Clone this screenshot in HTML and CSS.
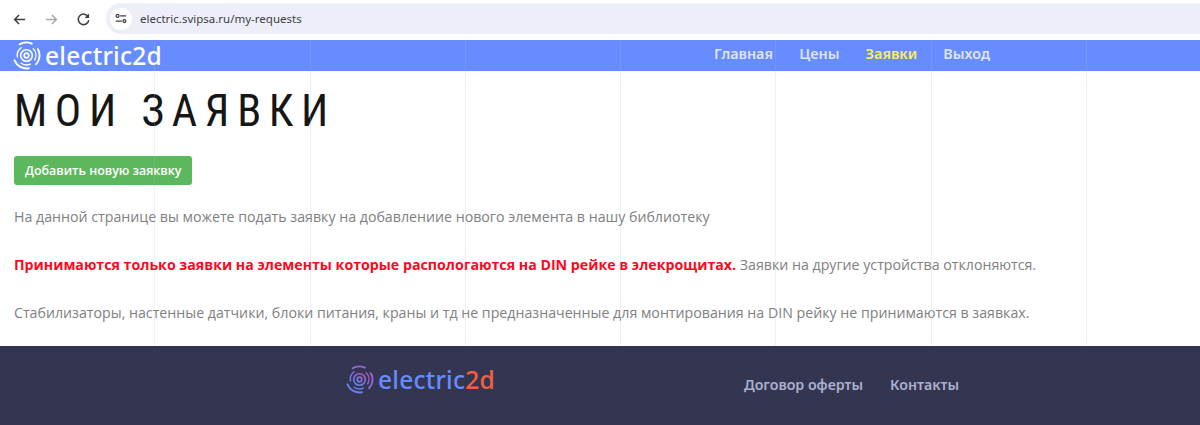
FILE: index.html
```html
<!DOCTYPE html>
<html lang="ru">
<head>
<meta charset="utf-8">
<title>Мои заявки</title>
<link rel="stylesheet" href="styles.css">
</head>
<body>
<header class="chrome">
  <svg class="nav-icon" viewBox="0 0 16 16"><path d="M14 8H3M7.5 3.2 2.8 8l4.7 4.8" fill="none" stroke="#3c4043" stroke-width="1.6"/></svg>
  <svg class="nav-icon" viewBox="0 0 16 16"><path d="M2 8h11M8.5 3.2 13.2 8l-4.7 4.8" fill="none" stroke="#a5a7aa" stroke-width="1.6"/></svg>
  <svg class="nav-icon" viewBox="0 0 16 16"><path d="M13 5.2A5.6 5.6 0 1 0 13.6 8.6" fill="none" stroke="#3c4043" stroke-width="1.6"/><path d="M13.9 1.6v4.8H9.1z" fill="#3c4043"/></svg>
  <div class="omnibox">
    <span class="site-chip">
      <svg viewBox="0 0 14 12" width="12" height="11"><g fill="none" stroke="#3c4043" stroke-width="1.5"><path d="M6 3h7M1 9h7"/><circle cx="3" cy="3" r="1.7"/><circle cx="11" cy="9" r="1.7"/></g></svg>
    </span>
    <span class="url">electric.svipsa.ru/my-requests</span>
  </div>
</header>

<div class="page">
  <div class="grid-lines">
    <i></i><i></i><i></i><i></i><i></i><i></i><i></i><i></i>
  </div>

  <nav class="navbar">
    <a class="logo logo-light" href="#">
      <svg class="logo-mark" viewBox="0 0 30 30">
        <g fill="none" stroke="#fff" stroke-linecap="round">
          <circle cx="15" cy="15" r="2.4" stroke-width="1.7"/>
          <circle cx="15" cy="15" r="6" stroke-width="1.6"/>
          <path d="M5.6 16.5A9.6 9.6 0 0 1 9.5 7M22 8A9.6 9.6 0 0 1 23.5 19.5M19 24A9.6 9.6 0 0 1 9.5 23" stroke-width="1.5"/>
          <path d="M8 3.4A13.4 13.4 0 0 1 20.5 2.8M26.8 8.5A13.4 13.4 0 0 1 25 24M17.5 28.2A13.4 13.4 0 0 1 2.6 20" stroke-width="2"/>
        </g>
      </svg>
      <span>electric2d</span>
    </a>
    <ul class="menu">
      <li><a href="#">Главная</a></li>
      <li><a href="#">Цены</a></li>
      <li><a class="active" href="#">Заявки</a></li>
      <li><a href="#">Выход</a></li>
    </ul>
  </nav>

  <main class="content">
    <h1>Мои заявки</h1>
    <a class="btn" href="#">Добавить новую заяквку</a>
    <p class="first">На данной странице вы можете подать заявку на добавлениие нового элемента в нашу библиотеку</p>
    <p><strong>Принимаются только заявки на элементы которые распологаются на DIN рейке в элекрощитах.</strong> Заявки на другие устройства отклоняются.</p>
    <p>Стабилизаторы, настенные датчики, блоки питания, краны и тд не предназначенные для монтирования на DIN рейку не принимаются в заявках.</p>
  </main>

  <footer class="footer">
    <a class="logo logo-color" href="#">
      <svg class="logo-mark" viewBox="0 0 30 30">
        <defs><linearGradient id="lg" x1="0" y1="1" x2="1" y2="0"><stop offset="0" stop-color="#4f8cf0"/><stop offset="1" stop-color="#b455c8"/></linearGradient></defs>
        <g fill="none" stroke="url(#lg)" stroke-linecap="round">
          <circle cx="15" cy="15" r="2.4" stroke-width="1.7"/>
          <circle cx="15" cy="15" r="6" stroke-width="1.6"/>
          <path d="M5.6 16.5A9.6 9.6 0 0 1 9.5 7M22 8A9.6 9.6 0 0 1 23.5 19.5M19 24A9.6 9.6 0 0 1 9.5 23" stroke-width="1.5"/>
          <path d="M8 3.4A13.4 13.4 0 0 1 20.5 2.8M26.8 8.5A13.4 13.4 0 0 1 25 24M17.5 28.2A13.4 13.4 0 0 1 2.6 20" stroke-width="2"/>
        </g>
      </svg>
      <span>electric<b>2d</b></span>
    </a>
    <div class="footer-links">
      <a href="#">Договор оферты</a>
      <a href="#">Контакты</a>
    </div>
  </footer>
</div>
</body>
</html>
```
FILE: styles.css
```css
* { box-sizing: border-box; }
html, body { margin: 0; padding: 0; }
body {
  width: 1200px;
  height: 425px;
  overflow: hidden;
  background: #fff;
  font-family: "Open Sans", "Noto Sans", sans-serif;
  color: #7a7a7a;
}
a { text-decoration: none; color: inherit; }

.chrome {
  height: 40px;
  display: flex;
  align-items: flex-start;
  padding: 3px 0 0 12px;
  background: #fff;
}
.nav-icon { width: 15px; height: 15px; margin: 9px 17px 0 0; flex: none; }
.nav-icon:nth-child(3) { margin-right: 15px; }
.omnibox {
  flex: 1;
  height: 31px;
  border-radius: 16px 0 0 16px;
  background: #edeff8;
  display: flex;
  align-items: center;
  padding-left: 4px;
}
.site-chip {
  width: 22px;
  height: 22px;
  border-radius: 50%;
  background: #fff;
  display: flex;
  align-items: center;
  justify-content: center;
  margin-right: 8px;
}
.url { font: 11.5px "Noto Sans", sans-serif; color: #3c4043; }

.page { position: relative; height: 385px; display: flex; flex-direction: column; }
.grid-lines {
  position: absolute;
  inset: 0;
  z-index: 2;
  pointer-events: none;
  display: grid;
  grid-template-columns: repeat(8, 155.3px);
  height: 306px;
}
.grid-lines i { border-right: 1px solid rgba(180, 185, 225, .22); }

.navbar {
  height: 31px;
  background: #668cff;
  display: flex;
  align-items: center;
  padding-left: 12px;
  position: relative;
}
.logo { display: flex; align-items: center; font-family: "Noto Sans", sans-serif; font-weight: 500; letter-spacing: .25px; }
.logo-mark { width: 29px; height: 29px; flex: none; margin-right: 4px; }
.logo-light { color: #fff; font-size: 24.5px; line-height: 29px; }
.logo-color { color: #668cff; font-size: 24.5px; line-height: 29px; }
.logo-color b { color: #f2613f; font-weight: 500; }

.menu {
  list-style: none;
  margin: 0;
  padding: 0 0 4px;
  position: absolute;
  left: 714px;
  top: 0;
  height: 31px;
  display: flex;
  align-items: center;
  gap: 26.2px;
  font: 600 14.4px "Noto Sans", sans-serif;
  color: #dfe4f6;
}
.menu .active { color: #ffee55; }

.content { flex: 1; padding: 0 14px; }
h1 {
  margin: 18px 0 0;
  font: 400 44px/44px Roboto, sans-serif;
  font-stretch: 75%;
  letter-spacing: 7.6px;
  text-transform: uppercase;
  color: #161616;
}
.btn {
  display: inline-block;
  margin-top: 23px;
  height: 29px;
  padding: 0 10.5px 0 11px;
  line-height: 29px;
  background: #5cb85c;
  border-radius: 3px;
  color: #fff;
  font-size: 12.4px;
  font-weight: 600;
}
.content p { margin: 0; font-size: 14.2px; line-height: 20px; color: #808080; }
.content p.first { margin-top: 22px; }
.content p + p { margin-top: 28px; }
.content strong { color: #fa0a20; font-weight: 700; }

.footer {
  height: 79px;
  background: #343651;
  display: flex;
  align-items: center;
  padding-left: 345px;
  padding-bottom: 12px;
}
.footer-links {
  margin-left: 249px;
  padding-top: 10px;
  display: flex;
  gap: 27px;
  font: 600 14.2px "Noto Sans", sans-serif;
  color: #acb0cf;
}
```
